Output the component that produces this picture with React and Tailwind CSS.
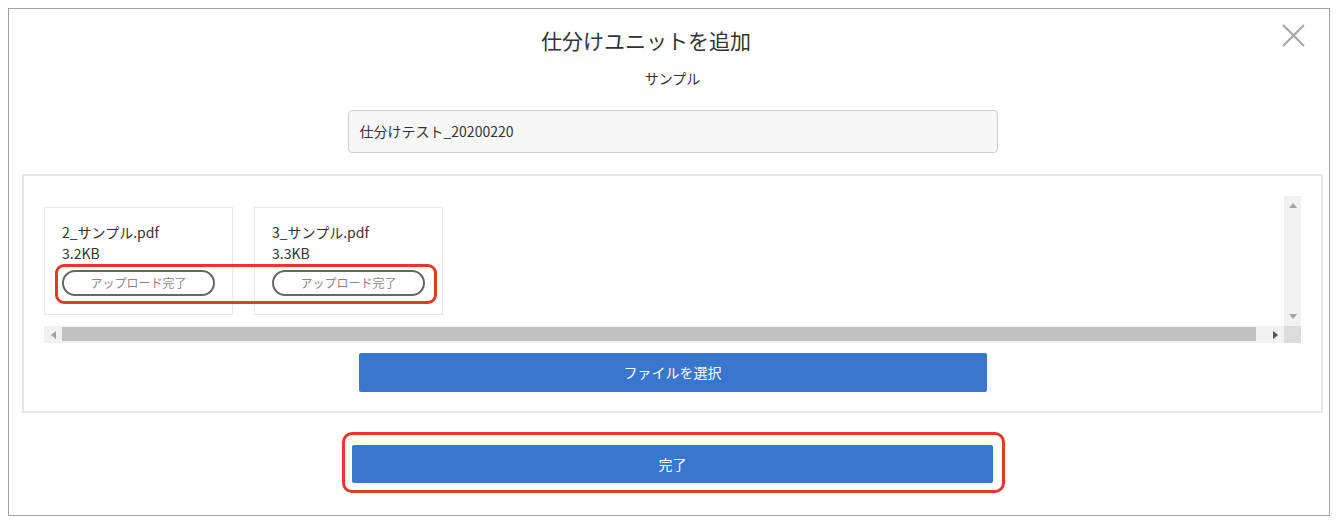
import React from "react";

const files = [
  { name: "2_サンプル.pdf", size: "3.2KB" },
  { name: "3_サンプル.pdf", size: "3.3KB" },
];

function Arrow({ dir, color }) {
  const pts = {
    up: "0,6 4,1 8,6",
    down: "0,1 4,6 8,1",
    left: "6,0 1,4 6,8",
    right: "1,0 6,4 1,8",
  };
  const vertical = dir === "up" || dir === "down";
  return (
    <svg width={vertical ? 8 : 7} height={vertical ? 7 : 8} viewBox={vertical ? "0 0 8 7" : "0 0 7 8"}>
      <polygon points={pts[dir]} fill={color} />
    </svg>
  );
}

function FileCard({ name, size }) {
  return (
    <div className="w-[189px] h-[108px] shrink-0 border border-[#e8e8e8] pl-[17px] pt-[14px]">
      <div className="text-[14px] leading-[21px] text-[#333]">{name}</div>
      <div className="text-[14px] leading-[21px] text-[#333]">{size}</div>
      <div className="mt-[6px] w-[153px] h-[26px] rounded-full border-2 border-[#666] flex items-center justify-center text-[12px] text-[#888]">
        アップロード完了
      </div>
    </div>
  );
}

export default function App() {
  return (
    <div
      className="w-[1338px] h-[524px] bg-white pt-[8px] pl-[8px]"
      style={{ fontFamily: '"Noto Sans CJK JP", sans-serif' }}
    >
      <div className="relative w-[1322px] h-[508px] border border-[#a3a3a3] bg-white">
        <h2 className="pt-[16px] pr-[46px] text-center text-[21px] leading-[30px] text-[#333] font-normal">
          仕分けユニットを追加
        </h2>

        <button className="absolute top-[15px] right-[24px] w-[23px] h-[23px]">
          <svg viewBox="0 0 23 23" width="23" height="23">
            <path d="M1 1 L22 22 M22 1 L1 22" stroke="#a8a8a8" strokeWidth="2.2" fill="none" />
          </svg>
        </button>

        <div className="pl-[13px] pr-[6px]">
          <p className="mt-[13px] text-center text-[14px] leading-[20px] text-[#333]">サンプル</p>

          <div className="mx-auto mt-[22px] w-[650px] h-[43px] rounded-[4px] border border-[#cdcdcd] bg-[#f7f7f7] flex items-center pl-[11px] text-[14px] text-[#333]">
            仕分けテスト_20200220
          </div>

          <div className="mt-[21px] border-2 border-[#e6e6e6] p-[20px] pb-[19px]">
            <div className="flex flex-col">
              <div className="flex h-[130px]">
                <div className="flex-1 overflow-hidden flex gap-[21px] pt-[11px]">
                  {files.map((f) => (
                    <FileCard key={f.name} {...f} />
                  ))}
                </div>
                <div className="w-[17px] bg-[#f1f1f1] flex flex-col items-center justify-between py-[6px]">
                  <Arrow dir="up" color="#a3a3a3" />
                  <Arrow dir="down" color="#a3a3a3" />
                </div>
              </div>
              <div className="flex h-[17px]">
                <div className="flex-1 flex bg-[#f1f1f1]">
                  <div className="w-[18px] flex items-center justify-center">
                    <Arrow dir="left" color="#a3a3a3" />
                  </div>
                  <div className="flex-1 pr-[11px] pt-[1px]">
                    <div className="h-[14px] bg-[#c1c1c1]" />
                  </div>
                  <div className="w-[17px] flex items-center justify-center">
                    <Arrow dir="right" color="#505050" />
                  </div>
                </div>
                <div className="w-[17px] bg-[#dcdcdc]" />
              </div>
            </div>

            <button className="mx-auto mt-[10px] block w-[628px] h-[39px] rounded-[2px] bg-[#3976cd] text-[14px] text-white">
              ファイルを選択
            </button>
          </div>

          <button className="mx-auto mt-[32px] block w-[641px] h-[38px] rounded-[2px] bg-[#3976cd] text-[14px] text-white">
            完了
          </button>
        </div>

        <div className="absolute left-[46px] top-[255px] w-[382px] h-[40px] rounded-[9px] border-[3px] border-[#e5372c] pointer-events-none" />
        <div className="absolute left-[333px] top-[423px] w-[663px] h-[61px] rounded-[10px] border-[3px] border-[#e5372c] pointer-events-none" />
      </div>
    </div>
  );
}
